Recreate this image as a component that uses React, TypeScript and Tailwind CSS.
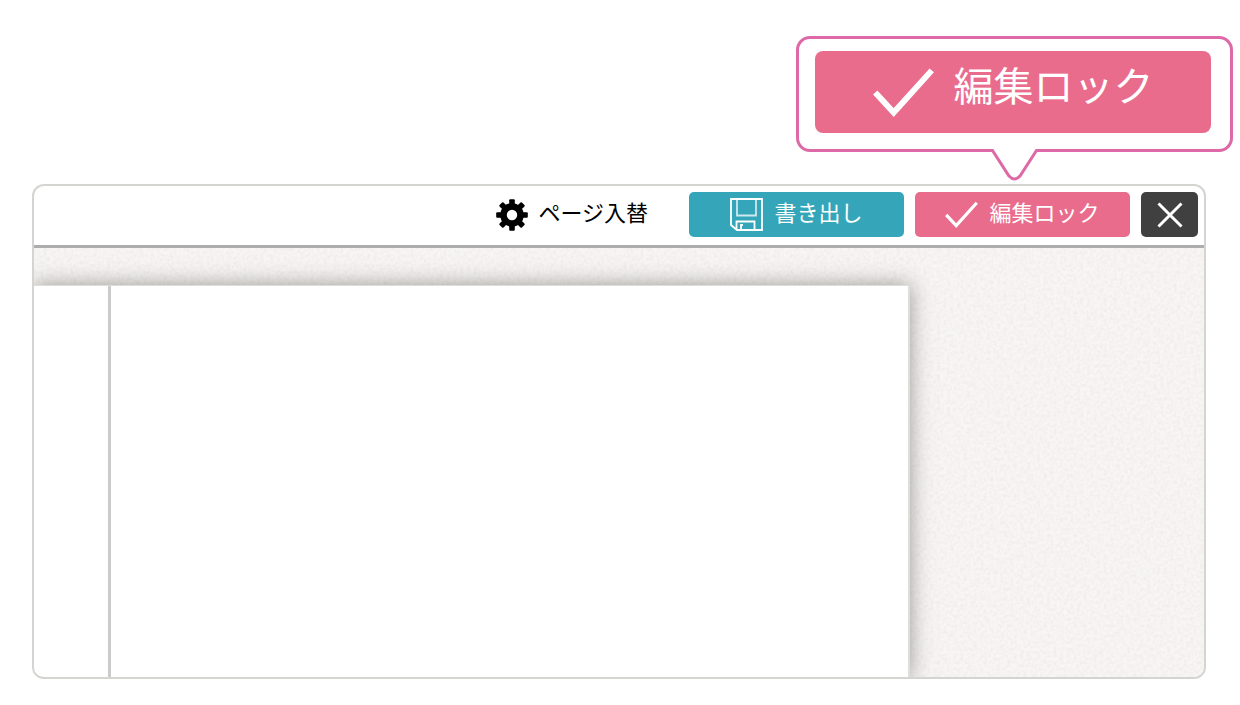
import type { ReactNode } from 'react';

function GearIcon() {
  const teeth = [0, 45, 90, 135, 180, 225, 270, 315];
  return (
    <svg viewBox="-16 -16 32 32" className="w-8 h-8" aria-hidden="true">
      {teeth.map((angle) => (
        <rect key={angle} x="-2.8" y="-15.8" width="5.6" height="7" rx="1" transform={`rotate(${angle})`} />
      ))}
      <circle r="8.5" fill="none" stroke="currentColor" strokeWidth="6.6" />
    </svg>
  );
}

function SaveIcon() {
  return (
    <svg viewBox="0 0 33 33" className="w-[33px] h-[33px]" fill="none" stroke="currentColor" aria-hidden="true">
      <path d="M1 1H32V32H7L1 27Z" strokeWidth="1.8" />
      <path d="M7 1V17.5H26V1" strokeWidth="1.8" opacity="0.75" />
      <path d="M6.5 31V23.5H24.5V31M11 31V27H13" strokeWidth="1.8" />
    </svg>
  );
}

function CheckIcon({ className }: { className: string }) {
  return (
    <svg viewBox="0 0 33 27" className={className} fill="none" stroke="currentColor" aria-hidden="true">
      <path d="M1.2 13.8L11.2 24.6L31.8 1.8" strokeWidth="3.2" />
    </svg>
  );
}

function CloseIcon() {
  return (
    <svg viewBox="0 0 26 26" className="w-[26px] h-[26px]" fill="none" stroke="currentColor" aria-hidden="true">
      <path d="M1.5 1.5L24.5 24.5M24.5 1.5L1.5 24.5" strokeWidth="3" />
    </svg>
  );
}

// Paper grain behind the spread
function PaperTexture() {
  return (
    <svg className="absolute inset-0 w-full h-full" aria-hidden="true">
      <filter id="grain" x="0" y="0" width="100%" height="100%" colorInterpolationFilters="sRGB">
        <feTurbulence type="fractalNoise" baseFrequency="0.3" numOctaves="3" seed="4" />
        <feColorMatrix values="0 0 0 0 0.62  0 0 0 0 0.58  0 0 0 0 0.55  0.2 0 0 0 -0.07" />
      </filter>
      <rect width="100%" height="100%" filter="url(#grain)" />
    </svg>
  );
}

interface ToolbarButtonProps {
  color: string;
  icon: ReactNode;
  label: string;
}

function ToolbarButton({ color, icon, label }: ToolbarButtonProps) {
  return (
    <button
      type="button"
      className={`w-[215px] h-[45px] rounded-[5px] flex items-center justify-center gap-[11px] text-white ${color}`}
    >
      {icon}
      <span className="pb-2 leading-8">{label}</span>
    </button>
  );
}

function Callout() {
  return (
    <div className="relative rounded-[14px] border-[3px] border-[#dd69a6] bg-white pt-3 pb-4 pl-4 pr-[19px]">
      <button
        type="button"
        className="w-[396px] h-[82px] rounded-lg flex items-center justify-center gap-5 bg-[#ea6c8c] text-white text-[40px]"
      >
        <CheckIcon className="w-[61px] h-[50px]" />
        <span className="pb-4 leading-[60px]">編集ロック</span>
      </button>
      <svg
        viewBox="0 0 48 34"
        className="absolute top-full left-1/2 -translate-x-1/2 w-12 h-[34px]"
        aria-hidden="true"
      >
        <path d="M1 0V1.5H2L19.5 27Q24 32 28.5 27L46 1.5H47V0Z" fill="white" />
        <path
          d="M0 1.5H1.5L18 27Q23.5 33 29 27L45.5 1.5H48"
          fill="none"
          stroke="#dd69a6"
          strokeWidth="3"
        />
      </svg>
    </div>
  );
}

export default function App() {
  return (
    <div className="min-h-screen flex flex-col bg-white pt-9 pb-[26px] text-[22px] text-black font-['Noto_Sans_CJK_JP',sans-serif]">
      <div className="flex justify-end pr-[7px] mb-8 z-10">
        <Callout />
      </div>

      <main className="flex-1 flex flex-col ml-8 mr-[34px] rounded-xl border-2 border-[#d4d4d0] overflow-hidden">
        <header className="flex items-center justify-end pt-[6px] pb-2 pr-[6px] border-b-[3px] border-[#adadad]">
          <button type="button" className="flex items-center gap-[10px] mr-[41px]">
            <GearIcon />
            <span className="pb-2 leading-8">ページ入替</span>
          </button>
          <div className="flex gap-[11px]">
            <ToolbarButton color="bg-[#35a6ba]" icon={<SaveIcon />} label="書き出し" />
            <ToolbarButton
              color="bg-[#ea6c8c]"
              icon={<CheckIcon className="w-[33px] h-[27px]" />}
              label="編集ロック"
            />
            <button
              type="button"
              aria-label="閉じる"
              className="w-[57px] h-[45px] rounded-[5px] flex items-center justify-center bg-[#404040] text-white"
            >
              <CloseIcon />
            </button>
          </div>
        </header>

        <div className="relative flex-1 flex flex-col overflow-hidden bg-[#f8f6f4]">
          <PaperTexture />
          <div className="relative flex-1 flex mt-[37px] mr-[294px] bg-white border-t border-r-2 border-[#dededc] shadow-[0_0_20px_rgba(60,60,55,0.5)]">
            <div className="w-[74px]" />
            <div className="flex-1 border-l-[3px] border-[#cbcbcb]" />
          </div>
        </div>
      </main>
    </div>
  );
}
